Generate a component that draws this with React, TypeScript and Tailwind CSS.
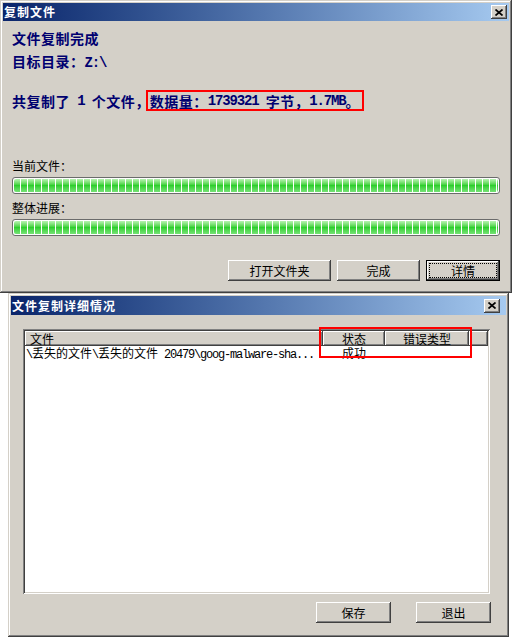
import React from "react";

const raised =
  "bg-[#d4d0c8] shadow-[inset_-1px_-1px_#404040,inset_1px_1px_#ffffff,inset_-2px_-2px_#808080,inset_2px_2px_#d4d0c8]";
const frame =
  "bg-[#d4d0c8] shadow-[inset_-1px_-1px_#404040,inset_1px_1px_#d4d0c8,inset_-2px_-2px_#808080,inset_2px_2px_#ffffff]";
const sunken =
  "bg-white shadow-[inset_1px_1px_#808080,inset_-1px_-1px_#ffffff,inset_2px_2px_#404040,inset_-2px_-2px_#d4d0c8]";

const latinSmall = "font-['Liberation_Mono',monospace] tracking-[-1.2px]";
const latinBig = "font-['Liberation_Mono',monospace] tracking-[-1.15px]";

// split a string into ascii / cjk runs so latin gets the half-width mono look
function Mixed({ text, latin }: { text: string; latin: string }) {
  const parts = text.match(/[\x20-\x7e]+|[^\x20-\x7e]+/g) ?? [];
  return (
    <>
      {parts.map((p, i) =>
        /^[\x20-\x7e]/.test(p) ? (
          <span key={i} className={latin}>
            {p}
          </span>
        ) : (
          <span key={i}>{p}</span>
        )
      )}
    </>
  );
}

function CloseBtn() {
  return (
    <div className={`flex h-[14px] w-[16px] items-center justify-center ${raised}`}>
      <svg width="8" height="7" viewBox="0 0 8 7">
        <path d="M0.5 0.5 L7.5 6.5 M7.5 0.5 L0.5 6.5" stroke="#000" strokeWidth="1.7" />
      </svg>
    </div>
  );
}

function TitleBar({ title, h, pr }: { title: string; h: string; pr: string }) {
  return (
    <div
      className={`flex items-center justify-between bg-linear-to-r from-[#0a246a] to-[#a6caf0] pl-[1px] ${h} ${pr}`}
    >
      <span className="text-[12px] font-bold leading-[14px] tracking-[1px] text-white">{title}</span>
      <CloseBtn />
    </div>
  );
}

function Btn({ label, w, focused }: { label: string; w: string; focused?: boolean }) {
  if (focused) {
    return (
      <div className={`flex h-[21px] border border-black p-[2px] ${w} ${raised}`}>
        <div className="flex flex-1 items-center justify-center border border-dotted border-black text-[12px] leading-[12px]">
          {label}
        </div>
      </div>
    );
  }
  return (
    <div className={`flex h-[21px] items-center justify-center text-[12px] leading-[12px] ${w} ${raised}`}>
      {label}
    </div>
  );
}

function Bar() {
  return (
    <div className="h-[17px] rounded-[3px] border border-[#6b6b6b] bg-white p-[1px]">
      <div className="flex h-full gap-[1px] overflow-hidden rounded-[2px]">
        {Array.from({ length: 70 }).map((_, i) => (
          <div
            key={i}
            className="h-full w-[6px] shrink-0 bg-linear-to-b from-[#b6f3b0] via-[#2ccf2c] to-[#74e274]"
          />
        ))}
      </div>
    </div>
  );
}

export default function App() {
  return (
    <div className="h-[638px] w-[513px] bg-white font-['Noto_Sans_CJK_SC',sans-serif] text-black">
      {/* copy dialog */}
      <div className={`flex h-[293px] w-[512px] flex-col p-[3px] ${frame}`}>
        <TitleBar title="复制文件" h="h-[18px]" pr="pr-[2px]" />
        <div className="flex flex-col px-[9px] text-[#000070]">
          <div className="mt-[9px] h-[16px] text-[14px] font-bold leading-[16px] tracking-[0.5px]">
            文件复制完成
          </div>
          <div className="mt-[7px] h-[16px] whitespace-pre text-[14px] font-bold leading-[16px] tracking-[0.5px]">
            <Mixed text="目标目录：Z:\" latin={latinBig} />
          </div>
          <div className="mt-[21px] flex h-[21px] items-center whitespace-pre text-[14px] font-bold leading-[16px] tracking-[0.5px]">
            <Mixed text="共复制了 1 个文件，" latin={latinBig} />
            <span className="-mx-[4px] inline-flex h-[21px] items-center border-2 border-[#ff0000] px-[2px]">
              <Mixed text="数据量：1739321 字节，1.7MB。" latin={latinBig} />
            </span>
          </div>
          <div className="mt-[48px] h-[14px] text-[12px] leading-[14px] text-black">当前文件：</div>
          <div className="mt-[4px]">
            <Bar />
          </div>
          <div className="mt-[7px] h-[14px] text-[12px] leading-[14px] text-black">整体进展：</div>
          <div className="mt-[4px]">
            <Bar />
          </div>
          <div className="mt-[24px] flex justify-end gap-[6px] text-black">
            <Btn label="打开文件夹" w="w-[103px]" />
            <Btn label="完成" w="w-[83px]" />
            <Btn label="详情" w="w-[74px]" focused />
          </div>
        </div>
      </div>

      {/* details dialog */}
      <div className={`ml-[8px] flex h-[344px] w-[501px] flex-col p-[3px] ${frame}`}>
        <TitleBar title="文件复制详细情况" h="h-[19px]" pr="pr-[6px]" />
        <div className={`relative ml-[12px] mt-[14px] h-[265px] w-[467px] p-[2px] ${sunken}`}>
          <div className="flex h-[15px] text-[12px] leading-[15px]">
            <div className={`w-[298px] pl-[5px] ${raised}`}>文件</div>
            <div className={`w-[62px] text-center ${raised}`}>状态</div>
            <div className={`w-[84px] text-center ${raised}`}>错误类型</div>
            <div className={`flex-1 ${raised}`} />
          </div>
          <div className="flex h-[14px] whitespace-pre text-[12px] leading-[14px]">
            <div className="w-[298px] pl-[1px]">
              <Mixed text="\丢失的文件\丢失的文件 20479\goog-malware-sha..." latin={latinSmall} />
            </div>
            <div className="w-[62px] text-center">成功</div>
          </div>
          <div className="absolute left-[296px] top-[-2px] h-[31px] w-[153px] border-2 border-[#ff0000]" />
        </div>
        <div className="mr-[15px] mt-[8px] flex justify-end gap-[25px]">
          <Btn label="保存" w="w-[75px]" />
          <Btn label="退出" w="w-[75px]" />
        </div>
      </div>
    </div>
  );
}
